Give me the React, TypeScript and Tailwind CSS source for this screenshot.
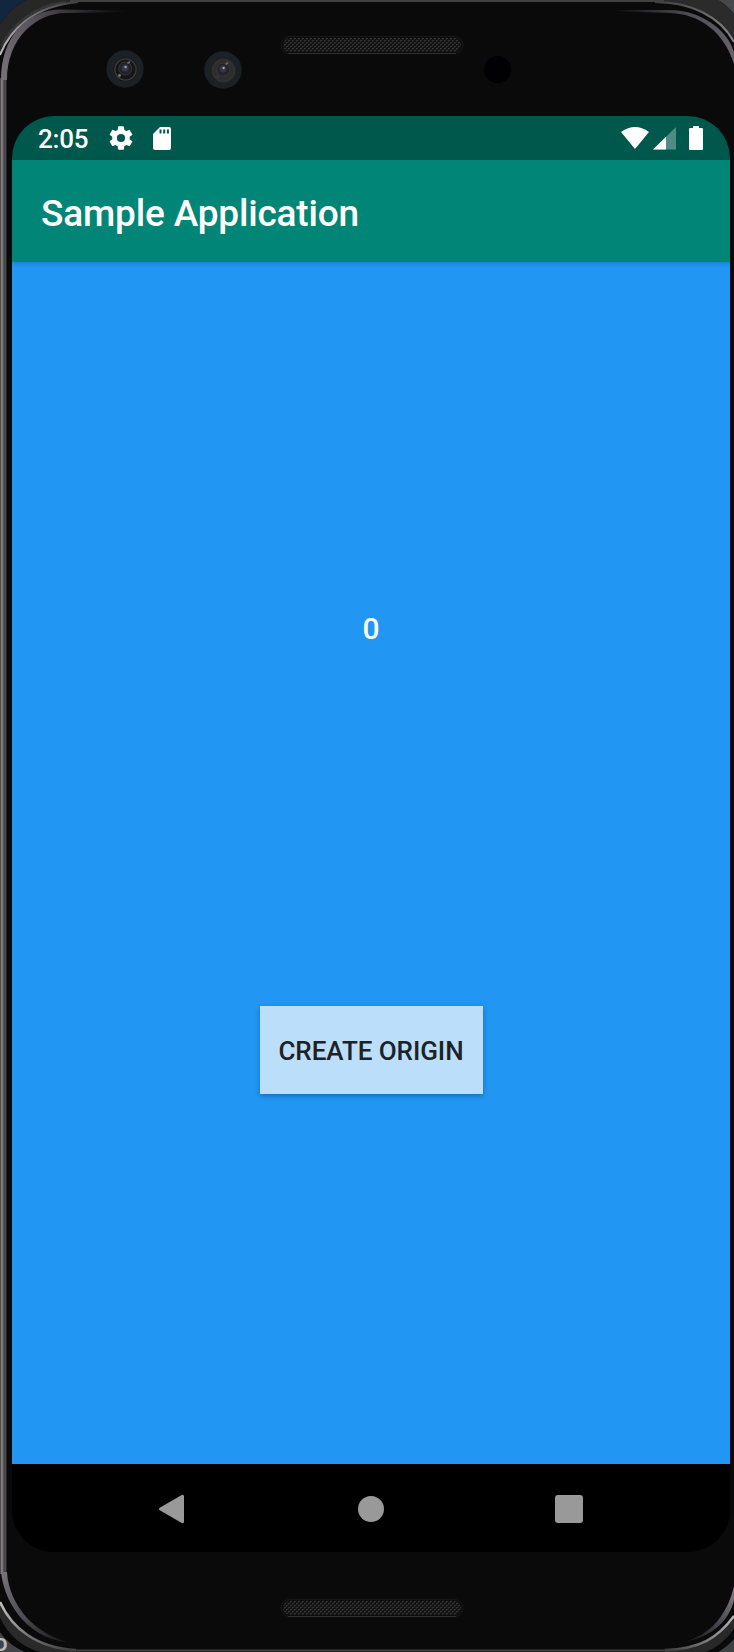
import React from 'react';

function Bezel() {
  return (
    <svg className="absolute inset-0 h-full w-full" viewBox="0 0 734 1652" preserveAspectRatio="none" fill="none" aria-hidden="true">
      <defs>
        <linearGradient id="rimL" x1="0" x2="1" y1="0" y2="0">
          <stop offset="0" stopColor="#303030" />
          <stop offset=".2" stopColor="#858080" />
          <stop offset=".4" stopColor="#777274" />
          <stop offset=".55" stopColor="#454448" />
          <stop offset=".8" stopColor="#4b4a50" />
          <stop offset="1" stopColor="#111" />
        </linearGradient>
        <linearGradient id="tl" gradientUnits="userSpaceOnUse" x1="0" y1="80" x2="125" y2="10">
          <stop offset="0" stopColor="#777379" />
          <stop offset=".4" stopColor="#56535a" />
          <stop offset="1" stopColor="#0a0a0a" />
        </linearGradient>
        <linearGradient id="tlOuter" gradientUnits="userSpaceOnUse" x1="0" y1="54" x2="74" y2="0">
          <stop offset="0" stopColor="#c0c0c0" />
          <stop offset=".5" stopColor="#777" />
          <stop offset="1" stopColor="#414141" />
        </linearGradient>
        <linearGradient id="tr" gradientUnits="userSpaceOnUse" x1="734" y1="60" x2="610" y2="10">
          <stop offset="0" stopColor="#66636a" />
          <stop offset=".45" stopColor="#4f4d54" />
          <stop offset="1" stopColor="#0a0a0a" />
        </linearGradient>
        <linearGradient id="trOuter" gradientUnits="userSpaceOnUse" x1="734" y1="40" x2="660" y2="0">
          <stop offset="0" stopColor="#888" />
          <stop offset="1" stopColor="#414141" />
        </linearGradient>
        <linearGradient id="bl" gradientUnits="userSpaceOnUse" x1="2" y1="1572" x2="72" y2="1642">
          <stop offset="0" stopColor="#777379" />
          <stop offset=".5" stopColor="#4b4951" />
          <stop offset="1" stopColor="#111" />
        </linearGradient>
        <linearGradient id="blOuter" gradientUnits="userSpaceOnUse" x1="0" y1="1600" x2="70" y2="1650">
          <stop offset="0" stopColor="#c4c4c4" />
          <stop offset=".5" stopColor="#777" />
          <stop offset="1" stopColor="#414141" />
        </linearGradient>
        <linearGradient id="br" gradientUnits="userSpaceOnUse" x1="734" y1="1590" x2="682" y2="1642">
          <stop offset="0" stopColor="#807d82" />
          <stop offset=".5" stopColor="#44424a" />
          <stop offset="1" stopColor="#111" />
        </linearGradient>
        <linearGradient id="brOuter" gradientUnits="userSpaceOnUse" x1="734" y1="1616" x2="670" y2="1650">
          <stop offset="0" stopColor="#b5b5b5" />
          <stop offset="1" stopColor="#414141" />
        </linearGradient>
      </defs>

      <path d="M0 0H26Q11 8 0 24Z" fill="#12263f" />
      <path d="M26 0Q11 8 0 24V56C10 30 33 6 78 3V0Z" fill="#272727" />
      <path d="M2 46C12 25 34 6 66 2" stroke="#363636" strokeWidth="3" />
      <path d="M718 0H734V14Q727 5 718 0Z" fill="#46494b" />
      <path d="M655 0H718Q727 5 734 14V42C720 16 690 3 655 3Z" fill="#2b2b2b" />
      <path d="M0 1632Q9 1645 25 1652H0Z" fill="#424346" />
      <path d="M0 1601C12 1628 36 1648 76 1650V1652H40Q13 1645 0 1618Z" fill="#2a2a2a" />
      <path d="M0 1618Q13 1645 40 1652H25Q9 1645 0 1632Z" fill="#090909" />
      <path d="M734 1639Q728 1646 718 1652H734Z" fill="#3e4142" />
      <path d="M734 1615C718 1638 700 1649 665 1649V1652H706Q723 1645 734 1629Z" fill="#282828" />

      <path d="M70 1H664" stroke="#414141" strokeWidth="2" />
      <path d="M70 1650.5H670" stroke="#414141" strokeWidth="2" />
      <rect x="0" y="78" width="7" height="1496" fill="url(#rimL)" />
      <path d="M0 55C10 30 33 6 78 2" stroke="url(#tlOuter)" strokeWidth="2" />
      <path d="M1 80C1 36 28 9 62 9.5L126 10.5V12L66 13C36 13 7 38 7 80Z" fill="url(#tl)" />
      <path d="M655 2C690 2 720 16 734 42" stroke="url(#trOuter)" strokeWidth="2" />
      <path d="M614 10H670C700 10 728 30 734 52V64C724 32 700 14 670 13L614 11Z" fill="url(#tr)" />
      <path d="M1 1572C5 1608 32 1641 73 1643C36 1636 9 1606 7 1572Z" fill="url(#bl)" />
      <path d="M0 1602C12 1628 36 1648 76 1650" stroke="url(#blOuter)" strokeWidth="2.5" />
      <path d="M734 1586C728 1612 712 1636 682 1642C714 1638 730 1618 734 1600Z" fill="url(#br)" />
      <path d="M734 1616C718 1638 700 1649 665 1650" stroke="url(#brOuter)" strokeWidth="2.5" />
    </svg>
  );
}

function Speaker({ id }: { id: string }) {
  return (
    <svg width="184" height="19" viewBox="0 0 184 19" aria-hidden="true">
      <defs>
        <pattern id={id} width="4" height="4" patternUnits="userSpaceOnUse">
          <rect width="4" height="4" fill="#131313" />
          <rect width="2" height="1" fill="#333" />
          <rect x="2" y="2" width="2" height="1" fill="#333" />
          <rect x="0" y="1" width="1" height="1" fill="#252525" />
          <rect x="2" y="3" width="1" height="1" fill="#252525" />
        </pattern>
      </defs>
      <rect x="1" y=".5" width="182" height="17" rx="8.5" fill="#0d0d0d" stroke="#181818" />
      <path d="M8 17.5H176" stroke="#303030" />
      <rect x="3" y="2" width="178" height="14" rx="7" fill={'url(#' + id + ')'} />
    </svg>
  );
}

function Camera({ flip }: { flip?: boolean }) {
  return (
    <svg width="38" height="38" viewBox="0 0 38 38" aria-hidden="true">
      <circle cx="19" cy="19" r="18.7" fill="#1b2125" />
      <circle cx="19.5" cy="19.5" r="12" fill={flip ? '#2d2d2e' : '#151617'} />
      <circle cx="19.5" cy="19.5" r="10.7" fill="none" stroke={flip ? '#333' : '#3d3b3a'} strokeWidth="1.3" />
      <circle cx="19.3" cy="18.5" r="6.5" fill={flip ? '#242426' : '#202125'} stroke="#35363a" />
      <circle cx="19" cy="18" r="3.5" fill="#34354a" />
      <circle cx="19.6" cy="17" r="1.2" fill="#9aa0b5" />
      <path d="M21.5 13.5L24 11.5" stroke="#666" strokeWidth="2" />
      <circle cx="13.5" cy="25.5" r="1.4" fill={flip ? '#383838' : '#87706d'} />
    </svg>
  );
}

function StatusBar() {
  return (
    <div className="flex h-11 shrink-0 items-center bg-[#00574b] pl-[26px] pr-[27px] text-white">
      <span className="w-[51px] whitespace-nowrap pt-px text-[26px] font-medium leading-[44px] tracking-[-0.2px]">2:05</span>
      <svg className="ml-[18px]" width="28" height="28" viewBox="0 0 24 24" fill="currentColor" aria-label="Settings">
        <path d="M19.43 12.98c.04-.32.07-.64.07-.98s-.03-.66-.07-.98l2.11-1.65c.19-.15.24-.42.12-.64l-2-3.46c-.12-.22-.39-.3-.61-.22l-2.49 1c-.52-.4-1.08-.73-1.69-.98l-.38-2.65A.488.488 0 0 0 14 2h-4c-.25 0-.46.18-.49.42l-.38 2.65c-.61.25-1.17.59-1.69.98l-2.49-1c-.23-.09-.49 0-.61.22l-2 3.46c-.13.22-.07.49.12.64l2.11 1.65c-.04.32-.07.65-.07.98s.03.66.07.98l-2.11 1.65c-.19.15-.24.42-.12.64l2 3.46c.12.22.39.3.61.22l2.49-1c.52.4 1.08.73 1.69.98l.38 2.65c.03.24.24.42.49.42h4c.25 0 .46-.18.49-.42l.38-2.65c.61-.25 1.17-.59 1.69-.98l2.49 1c.23.09.49 0 .61-.22l2-3.46c.12-.22.07-.49-.12-.64l-2.11-1.65zM12 15.5a3.5 3.5 0 1 1 0-7 3.5 3.5 0 0 1 0 7z" />
      </svg>
      <svg className="ml-[18px]" width="18" height="23" viewBox="0 0 18 23" aria-label="SD card">
        <path d="M7 0H16Q18 0 18 2V21Q18 23 16 23H2Q0 23 0 21V7Z" fill="white" />
        <path d="M7.5 2.5V6.5M11.2 2.5V6.5M14.9 2.5V6.5" stroke="#00574b" strokeWidth="2" />
      </svg>
      <svg className="ml-auto" width="28" height="22" viewBox="0 0 28 22" fill="white" aria-label="Wi-Fi">
        <path d="M0 5Q14-5 28 5L14 22Z" />
      </svg>
      <svg className="ml-1" width="23" height="23" viewBox="0 0 23 23" aria-label="Signal">
        <path d="M23 0V22.5H0Z" fill="#4f8d84" />
        <path d="M13 9.8V22.5H0Z" fill="white" />
      </svg>
      <svg className="ml-[13px]" width="14" height="24" viewBox="0 0 14 24" fill="white" aria-label="Battery">
        <path d="M4 0H10V2H13Q14 2 14 3V23Q14 24 13 24H1Q0 24 0 23V3Q0 2 1 2H4Z" />
      </svg>
    </div>
  );
}

export default function App() {
  return (
    <div className="relative h-[1652px] w-[734px] overflow-hidden bg-[#0a0a0a] font-['Roboto',sans-serif]">
      <Bezel />
      <span className="absolute bottom-[-3px] left-[-6px] text-[24px] font-medium leading-[24px] text-[#bbbcbd]">o</span>
      <div className="relative flex h-full flex-col pl-3 pr-1">
        <header className="flex h-[116px] shrink-0 items-start">
          <div className="ml-[94px] mt-[50px]"><Camera /></div>
          <div className="ml-[60px] mt-[51px]"><Camera flip /></div>
          <div className="ml-[38px] mt-9"><Speaker id="earpiece" /></div>
          <div className="ml-5 mt-14 size-[27px] rounded-full bg-[#010002]" />
        </header>
        <main className="flex h-[1436px] shrink-0 flex-col overflow-hidden rounded-[42px] bg-black">
          <StatusBar />
          <div className="z-10 flex h-[102px] shrink-0 items-center bg-[#008577] pl-[29px] shadow-[0_1px_4px_rgba(0,0,0,0.2)]">
            <h1 className="pt-1.5 text-[37px] font-medium leading-[44px] tracking-[-0.17px] text-white">Sample Application</h1>
          </div>
          <section className="flex h-[1202px] shrink-0 flex-col items-center bg-[#2196f3]">
            <output className="mt-[345px] text-[30px] font-medium leading-[44px] text-white">0</output>
            <button className="mt-[355px] h-[88px] w-[223px] whitespace-nowrap bg-[#bbdefb] pt-0.5 text-[26px] font-medium tracking-[-0.05px] text-[#1c2226] shadow-[0_2px_5px_rgba(0,0,0,0.28)]">CREATE ORIGIN</button>
          </section>
          <nav className="flex h-[88px] shrink-0 items-center bg-black pl-[146px] pt-px">
            <svg width="27" height="30" viewBox="0 0 27 30" aria-label="Back">
              <path d="M2.5 15L24.5 2.2V27.8Z" fill="#999" stroke="#999" strokeWidth="3" strokeLinejoin="round" />
            </svg>
            <div className="ml-[173px] size-[26px] rounded-full bg-[#999]" />
            <div className="ml-[171px] size-7 rounded-[3px] bg-[#999]" />
          </nav>
        </main>
        <footer className="flex flex-1 items-start pl-[268px] pt-[47px]"><Speaker id="loudspeaker" /></footer>
      </div>
    </div>
  );
}
